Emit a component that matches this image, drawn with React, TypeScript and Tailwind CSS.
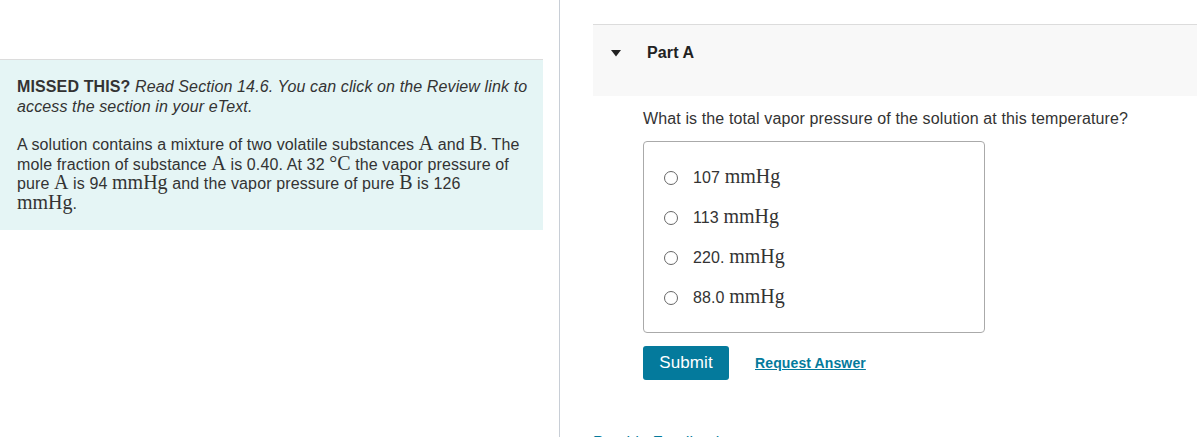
import React from 'react';

const sans = { fontFamily: '"Liberation Sans", Arial, sans-serif' };

function M({ children }: { children: React.ReactNode }) {
  // math bits render in a serif face, like the KaTeX output in the original
  return <span className="font-['Liberation_Serif',serif] text-[20px] leading-[0] tracking-normal">{children}</span>;
}

const options = ['107', '113', '220.', '88.0'];

export default function App() {
  return (
    <div className="flex w-[1197px] h-[437px] overflow-hidden bg-white text-[#333] tracking-[0.12px]" style={sans}>
      {/* left column: the hint and problem statement */}
      <div className="w-[543px] shrink-0 pt-[59px]">
        <div className="border-t border-[#dcdcdc] bg-[#e5f5f5] pl-[17px] pt-[17px] pb-[16px] text-[16px] leading-[20px]">
          <p>
            <span className="font-bold">MISSED THIS?</span>{' '}
            <i>
              Read Section 14.6. You can click on the Review link to
              <br />
              access the section in your eText.
            </i>
          </p>
          <p className="mt-[18px] leading-[19.7px]">
            A solution contains a mixture of two volatile substances <M>A</M> and <M>B</M>. The
            <br />
            mole fraction of substance <M>A</M> is 0.40. At 32 <M>°C</M> the vapor pressure of
            <br />
            pure <M>A</M> is 94 <M>mmHg</M> and the vapor pressure of pure <M>B</M> is 126
            <br />
            <M>mmHg</M>.
          </p>
        </div>
      </div>

      <div className="ml-[16px] w-px shrink-0 bg-[#c8ced6]" />

      {/* right column: Part A */}
      <div className="flex-1 pl-[33px] pt-[24px]">
        <div className="flex h-[72px] items-start border-t border-[#dcdcdc] bg-[#f8f8f8] pt-[18px] pl-[18px]">
          <svg width="10" height="7" viewBox="0 0 10 7" className="mt-[7px]">
            <path d="M0 0H10L5 6.5Z" fill="#222" />
          </svg>
          <span className="ml-[26px] text-[16px] leading-[20px] font-bold text-[#222]">Part A</span>
        </div>

        <div className="pl-[50px]">
          <p className="mt-[13px] text-[16px] leading-[20px]">
            What is the total vapor pressure of the solution at this temperature?
          </p>

          <div className="mt-[12px] w-[342px] rounded-[4px] border border-[#aaa] pt-[16px] pb-[14px]">
            {options.map((o) => (
              <label key={o} className="flex h-[40px] items-center pl-[20px]">
                <span className="h-[14px] w-[14px] rounded-full border-[1.5px] border-[#666] bg-white" />
                <span className="ml-[15px] text-[16px]">
                  {o} <M>mmHg</M>
                </span>
              </label>
            ))}
          </div>

          <div className="mt-[13px] flex items-center">
            <button className="h-[34px] w-[86px] rounded-[3px] bg-[#047a9c] text-[17px] text-white">Submit</button>
            <a className="ml-[26px] text-[14px] font-bold text-[#047a9c] underline" href="#">
              Request Answer
            </a>
          </div>
        </div>

        <p className="mt-[51px] text-[16px] text-[#047a9c]">Provide Feedback</p>
      </div>
    </div>
  );
}
